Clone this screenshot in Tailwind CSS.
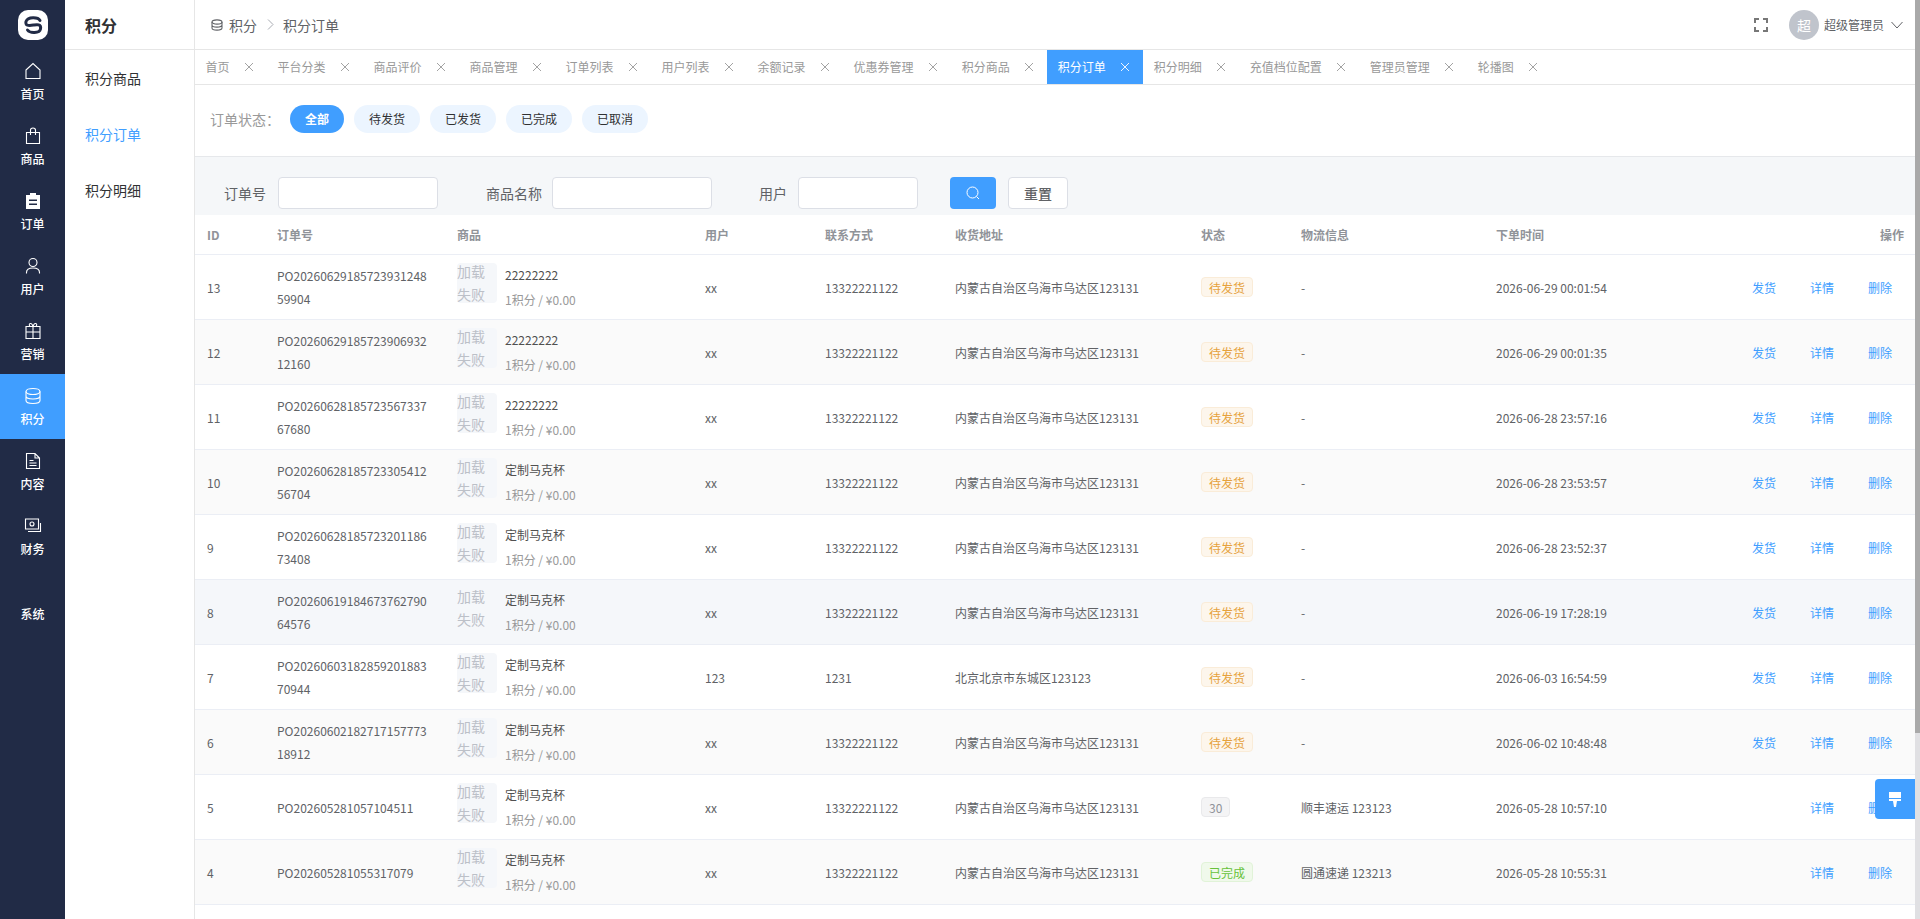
<!DOCTYPE html>
<html lang="zh-CN">
<head>
  <meta charset="UTF-8" />
  <title>积分订单</title>
  <script src="https://cdn.jsdelivr.net/npm/@tailwindcss/browser@4"></script>
</head>
<body class="relative flex h-screen w-full overflow-hidden bg-white font-['Noto_Sans_CJK_SC','Noto_Sans',sans-serif] text-xs text-[#606266]">

  <!-- main nav -->
  <nav class="w-[65px] shrink-0 bg-[#212b46] text-white">
    <div class="flex h-[49px] justify-center pt-[10px]">
      <div class="flex size-[30px] items-center justify-center rounded-[10px] bg-white">
        <svg class="size-[30px]" viewBox="0 0 30 30" fill="none" stroke="#212b46" stroke-width="3" stroke-linecap="round"><path d="M22 10.5C20 7 10 6.5 8 11.500C6.500 17 14 15.300 16 15C19 14.500 23.500 14 22.500 19C21.500 23.500 12 23.500 9.500 20"/></svg>
      </div>
    </div>
    <a class="flex h-[65px] flex-col items-center pt-[13px]">
      <svg class="size-[18px]" viewBox="0 0 18 18" fill="none" stroke="currentColor" stroke-width="1.1"><path d="M2 8 9 1.500 16 8v8.500H2z"/></svg>
      <span class="mt-[6px] font-medium">首页</span>
    </a>
    <a class="flex h-[65px] flex-col items-center pt-[13px]">
      <svg class="size-[18px]" viewBox="0 0 18 18" fill="none" stroke="currentColor" stroke-width="1.1"><path d="M2.500 5.500h13v11h-13zM6.500 8V3.200C6.500 1.800 7.500 1 9 1s2.500 .8 2.500 2.200V8"/></svg>
      <span class="mt-[6px] font-medium">商品</span>
    </a>
    <a class="flex h-[65px] flex-col items-center pt-[13px]">
      <svg class="size-[18px]" viewBox="0 0 18 18" fill="currentColor"><path d="M6 1h6v2h4v14H2V3h4zM5 7.500v1.500h8V7.500zM5 11.500V13h8v-1.500z"/></svg>
      <span class="mt-[6px] font-medium">订单</span>
    </a>
    <a class="flex h-[65px] flex-col items-center pt-[13px]">
      <svg class="size-[18px]" viewBox="0 0 18 18" fill="none" stroke="currentColor" stroke-width="1.1"><circle cx="9" cy="5.500" r="4"/><path d="M2.500 16.500v-1C2.500 12.500 5 11 9 11s6.500 1.500 6.500 4.500v1"/></svg>
      <span class="mt-[6px] font-medium">用户</span>
    </a>
    <a class="flex h-[65px] flex-col items-center pt-[13px]">
      <svg class="size-[18px]" viewBox="0 0 18 18" fill="none" stroke="currentColor" stroke-width="1.1"><path d="M2 4.500h14v12H2zM2 10h14M9 4.500v12M6 4.500C4.500 2.500 5.500 1.200 7 1.500 8.200 1.800 9 4.500 9 4.500S9.800 1.800 11 1.500C12.500 1.200 13.500 2.500 12 4.500"/></svg>
      <span class="mt-[6px] font-medium">营销</span>
    </a>
    <a class="flex h-[65px] flex-col items-center bg-[#409eff] pt-[13px]">
      <svg class="size-[18px]" viewBox="0 0 18 18" fill="none" stroke="currentColor" stroke-width="1.1"><ellipse cx="9" cy="4.500" rx="7" ry="3"/><path d="M2 4.500v9c0 1.700 3.100 3 7 3s7-1.300 7-3v-9M2 9c0 1.700 3.100 3 7 3s7-1.300 7-3"/></svg>
      <span class="mt-[6px] font-medium">积分</span>
    </a>
    <a class="flex h-[65px] flex-col items-center pt-[13px]">
      <svg class="size-[18px]" viewBox="0 0 18 18" fill="none" stroke="currentColor" stroke-width="1.1"><path d="M2.500 1.500h8.500l4.500 4.500v10.500h-13zM11 1.500V6h4.500M5.500 8.500h4M5.500 11h7M5.500 13.500h7"/></svg>
      <span class="mt-[6px] font-medium">内容</span>
    </a>
    <a class="flex h-[65px] flex-col items-center pt-[13px]">
      <svg class="size-[18px]" viewBox="0 0 18 18" fill="none" stroke="currentColor" stroke-width="1.1"><path d="M1.500 2h13v10h-13zM4 14.500h12.500V6"/><circle cx="8" cy="7" r="2"/></svg>
      <span class="mt-[6px] font-medium">财务</span>
    </a>
    <a class="flex h-[65px] flex-col items-center pt-[37px]">
      <span class="font-medium">系统</span>
    </a>
  </nav>

  <!-- sub nav -->
  <aside class="w-[130px] shrink-0 border-r border-[#e6e6e6]">
    <div class="flex h-[50px] items-center border-b border-[#e6e6e6] pl-[20px] text-base font-bold text-[#303133]">积分</div>
    <div class="pl-[20px] text-sm text-[#303133]">
      <div class="flex h-[56px] items-center">积分商品</div>
      <div class="flex h-[56px] items-center text-[#409eff]">积分订单</div>
      <div class="flex h-[56px] items-center">积分明细</div>
    </div>
  </aside>

  <main class="min-w-0 flex-1 overflow-hidden">
    <header class="flex h-[50px] items-center border-b border-[#e6e6e6] pr-[12px] pl-[16px]">
      <svg class="size-[12px] text-[#606266]" viewBox="0 0 18 18" fill="none" stroke="currentColor" stroke-width="1.6"><ellipse cx="9" cy="4.500" rx="7.500" ry="3.200"/><path d="M1.500 4.500v9c0 1.700 3.300 3.200 7.500 3.200s7.500-1.500 7.500-3.200v-9M1.500 9c0 1.700 3.300 3.200 7.500 3.200s7.500-1.500 7.500-3.200"/></svg>
      <span class="ml-[6px] text-sm">积分</span>
      <svg class="mr-[9px] ml-[10px] h-[11px] w-[7px] text-[#a8abb2]" viewBox="0 0 7 11" fill="none" stroke="currentColor"><path d="M1 .5 6 5.500 1 10.500"/></svg>
      <span class="text-sm">积分订单</span>
      <svg class="ml-auto size-[14px] text-[#777]" viewBox="0 0 14 14" fill="none" stroke="currentColor" stroke-width="2"><path d="M1 5V1h4M9 1h4v4M13 9v4H9M5 13H1V9"/></svg>
      <div class="ml-[21px] flex size-[30px] items-center justify-center rounded-full bg-[#c0c4cc] text-sm text-white">超</div>
      <span class="ml-[5px]">超级管理员</span>
      <svg class="ml-[7px] h-[8px] w-[12px] text-[#606266]" viewBox="0 0 12 8" fill="none" stroke="currentColor"><path d="M.5 1 6 7l5.500-6"/></svg>
    </header>

    <div id="tabs" class="flex h-[35px] border-b border-[#e6e6e6] text-[#999]"></div>

    <div class="flex h-[72px] items-center border-b border-[#e6e8eb] pb-[3px] pl-[15px]">
      <span class="text-sm text-[#999]">订单状态：</span>
      <div class="ml-[10px] flex gap-[10px]">
        <span class="flex h-[28px] w-[54px] items-center justify-center rounded-full bg-[#409eff] font-bold text-white">全部</span>
        <span class="flex h-[28px] w-[66px] items-center justify-center rounded-full bg-[#ecf5ff] text-[#303133]">待发货</span>
        <span class="flex h-[28px] w-[66px] items-center justify-center rounded-full bg-[#ecf5ff] text-[#303133]">已发货</span>
        <span class="flex h-[28px] w-[66px] items-center justify-center rounded-full bg-[#ecf5ff] text-[#303133]">已完成</span>
        <span class="flex h-[28px] w-[66px] items-center justify-center rounded-full bg-[#ecf5ff] text-[#303133]">已取消</span>
      </div>
    </div>

    <div class="flex h-[58px] items-start bg-[#f5f7f9] pt-[20px] pl-[29px] text-sm">
      <label class="leading-[32px]">订单号</label>
      <input class="ml-[12px] h-[32px] w-[160px] rounded-[4px] border border-[#dcdfe6] bg-white" />
      <label class="ml-[48px] leading-[32px]">商品名称</label>
      <input class="ml-[10px] h-[32px] w-[160px] rounded-[4px] border border-[#dcdfe6] bg-white" />
      <label class="ml-[47px] leading-[32px]">用户</label>
      <input class="ml-[11px] h-[32px] w-[120px] rounded-[4px] border border-[#dcdfe6] bg-white" />
      <button class="ml-[32px] flex h-[32px] w-[46px] items-center justify-center rounded-[4px] bg-[#409eff]">
        <svg class="size-[14px] text-white" viewBox="0 0 14 14" fill="none" stroke="currentColor"><circle cx="6.500" cy="6.500" r="5.500"/><path d="m10.500 10.500 2.500 2.500"/></svg>
      </button>
      <button class="ml-[12px] h-[32px] w-[60px] rounded-[4px] border border-[#dcdfe6] bg-white font-medium">重置</button>
    </div>

    <table class="w-full table-fixed border-separate border-spacing-0">
      <colgroup>
        <col class="w-[70px]" /><col class="w-[180px]" /><col class="w-[248px]" /><col class="w-[120px]" /><col class="w-[130px]" /><col class="w-[246px]" /><col class="w-[100px]" /><col class="w-[195px]" /><col class="w-[230px]" /><col />
      </colgroup>
      <thead>
        <tr class="text-left font-bold text-[#909399]">
          <th class="h-[40px] border-b border-[#ebeef5] px-[12px]">ID</th>
          <th class="h-[40px] border-b border-[#ebeef5] px-[12px]">订单号</th>
          <th class="h-[40px] border-b border-[#ebeef5] px-[12px]">商品</th>
          <th class="h-[40px] border-b border-[#ebeef5] px-[12px]">用户</th>
          <th class="h-[40px] border-b border-[#ebeef5] px-[12px]">联系方式</th>
          <th class="h-[40px] border-b border-[#ebeef5] px-[12px]">收货地址</th>
          <th class="h-[40px] border-b border-[#ebeef5] px-[12px]">状态</th>
          <th class="h-[40px] border-b border-[#ebeef5] px-[12px]">物流信息</th>
          <th class="h-[40px] border-b border-[#ebeef5] px-[12px]">下单时间</th>
          <th class="h-[40px] border-b border-[#ebeef5] pr-[11px] pl-[12px] text-right">操作</th>
        </tr>
      </thead>
      <tbody id="rows"></tbody>
    </table>
  </main>

  <!-- scrollbar -->
  <div class="w-[5px] shrink-0 bg-[#e0e0e3]">
    <div class="h-[733px] bg-[#a9a9a9]"></div>
  </div>

  <button class="absolute top-[779px] right-[5px] flex size-[40px] items-center justify-center rounded-l-[4px] bg-[#409eff]">
    <svg class="h-[15px] w-[12px] text-white" viewBox="0 0 12 15" fill="currentColor"><path d="M0 0h12v6H0zM0 7h12v2H8l-1 6H5L4 9H0z"/></svg>
  </button>

  <script>
    const tabs = ["首页", "平台分类", "商品评价", "商品管理", "订单列表", "用户列表", "余额记录", "优惠券管理", "积分商品", "积分订单", "积分明细", "充值档位配置", "管理员管理", "轮播图"];
    document.getElementById("tabs").innerHTML = tabs.map(t => {
      const on = t === "积分订单";
      return `<div class="flex items-center pr-[13.5px] pl-[10.5px] ${on ? "bg-[#409eff] text-white" : ""}">
        <span>${t}</span>
        <svg class="ml-[14px] size-[10px]" viewBox="0 0 10 10" fill="none" stroke="currentColor" stroke-width=".9"><path d="m1 1 8 8M9 1l-8 8"/></svg>
      </div>`;
    }).join("");

    const addr = "内蒙古自治区乌海市乌达区123131";
    const rows = [
      [13, "PO2026062918572393124859904", "22222222", "xx", "13322221122", addr, "wait", "-", "2026-06-29 00:01:54"],
      [12, "PO2026062918572390693212160", "22222222", "xx", "13322221122", addr, "wait", "-", "2026-06-29 00:01:35"],
      [11, "PO2026062818572356733767680", "22222222", "xx", "13322221122", addr, "wait", "-", "2026-06-28 23:57:16"],
      [10, "PO2026062818572330541256704", "定制马克杯", "xx", "13322221122", addr, "wait", "-", "2026-06-28 23:53:57"],
      [9, "PO2026062818572320118673408", "定制马克杯", "xx", "13322221122", addr, "wait", "-", "2026-06-28 23:52:37"],
      [8, "PO2026061918467376279064576", "定制马克杯", "xx", "13322221122", addr, "wait", "-", "2026-06-19 17:28:19"],
      [7, "PO2026060318285920188370944", "定制马克杯", "123", "1231", "北京北京市东城区123123", "wait", "-", "2026-06-03 16:54:59"],
      [6, "PO2026060218271715777318912", "定制马克杯", "xx", "13322221122", addr, "wait", "-", "2026-06-02 10:48:48"],
      [5, "PO202605281057104511", "定制马克杯", "xx", "13322221122", addr, "30", "顺丰速运 123123", "2026-05-28 10:57:10"],
      [4, "PO202605281055317079", "定制马克杯", "xx", "13322221122", addr, "done", "圆通速递 123213", "2026-05-28 10:55:31"],
    ];
    const tags = {
      wait: `<span class="inline-block h-[20px] rounded-[4px] border border-[#faecd8] bg-[#fdf6ec] px-[7px] leading-[19px] text-[#e6a23c]">待发货</span>`,
      30: `<span class="inline-block h-[20px] rounded-[4px] border border-[#e9e9eb] bg-[#f4f4f5] px-[7px] leading-[19px] text-[#909399]">30</span>`,
      done: `<span class="inline-block h-[20px] rounded-[4px] border border-[#e1f3d8] bg-[#f0f9eb] px-[7px] leading-[19px] text-[#67c23a]">已完成</span>`,
    };
    const td = "h-[65px] border-b border-[#ebeef5] px-[12px]";
    document.getElementById("rows").innerHTML = rows.map(([id, no, name, user, phone, address, status, ship, time], i) => {
      const bg = id === 8 ? "bg-[#f5f7fa]" : i % 2 ? "bg-[#fafafa]" : "";
      return `<tr class="${bg}">
        <td class="${td} pt-[2px]">${id}</td>
        <td class="${td}"><div class="w-[150px] leading-[23px] break-all">${no}</div></td>
        <td class="${td}">
          <div class="flex items-start">
            <div class="mt-[1px] flex h-[40px] w-[40px] shrink-0 items-center rounded-[4px] bg-[#f5f7fa] text-sm leading-[23px] text-[#bcc0c8]">加载失败</div>
            <div class="ml-[8px] leading-[25px]">
              <div class="text-[#505050]">${name}</div>
              <div class="text-[#999]">1积分 / ¥0.00</div>
            </div>
          </div>
        </td>
        <td class="${td} pt-[2px]">${user}</td>
        <td class="${td} pt-[2px]">${phone}</td>
        <td class="${td} pt-[2px]">${address}</td>
        <td class="${td}">${tags[status]}</td>
        <td class="${td} pt-[2px]">${ship}</td>
        <td class="${td} pt-[2px]">${time}</td>
        <td class="${td} pt-[2px] pr-[23px]">
          <div class="flex justify-end gap-[34px] text-[#409eff]">
            ${status === "wait" ? "<a>发货</a>" : ""}<a>详情</a><a>删除</a>
          </div>
        </td>
      </tr>`;
    }).join("");
  </script>
</body>
</html>
